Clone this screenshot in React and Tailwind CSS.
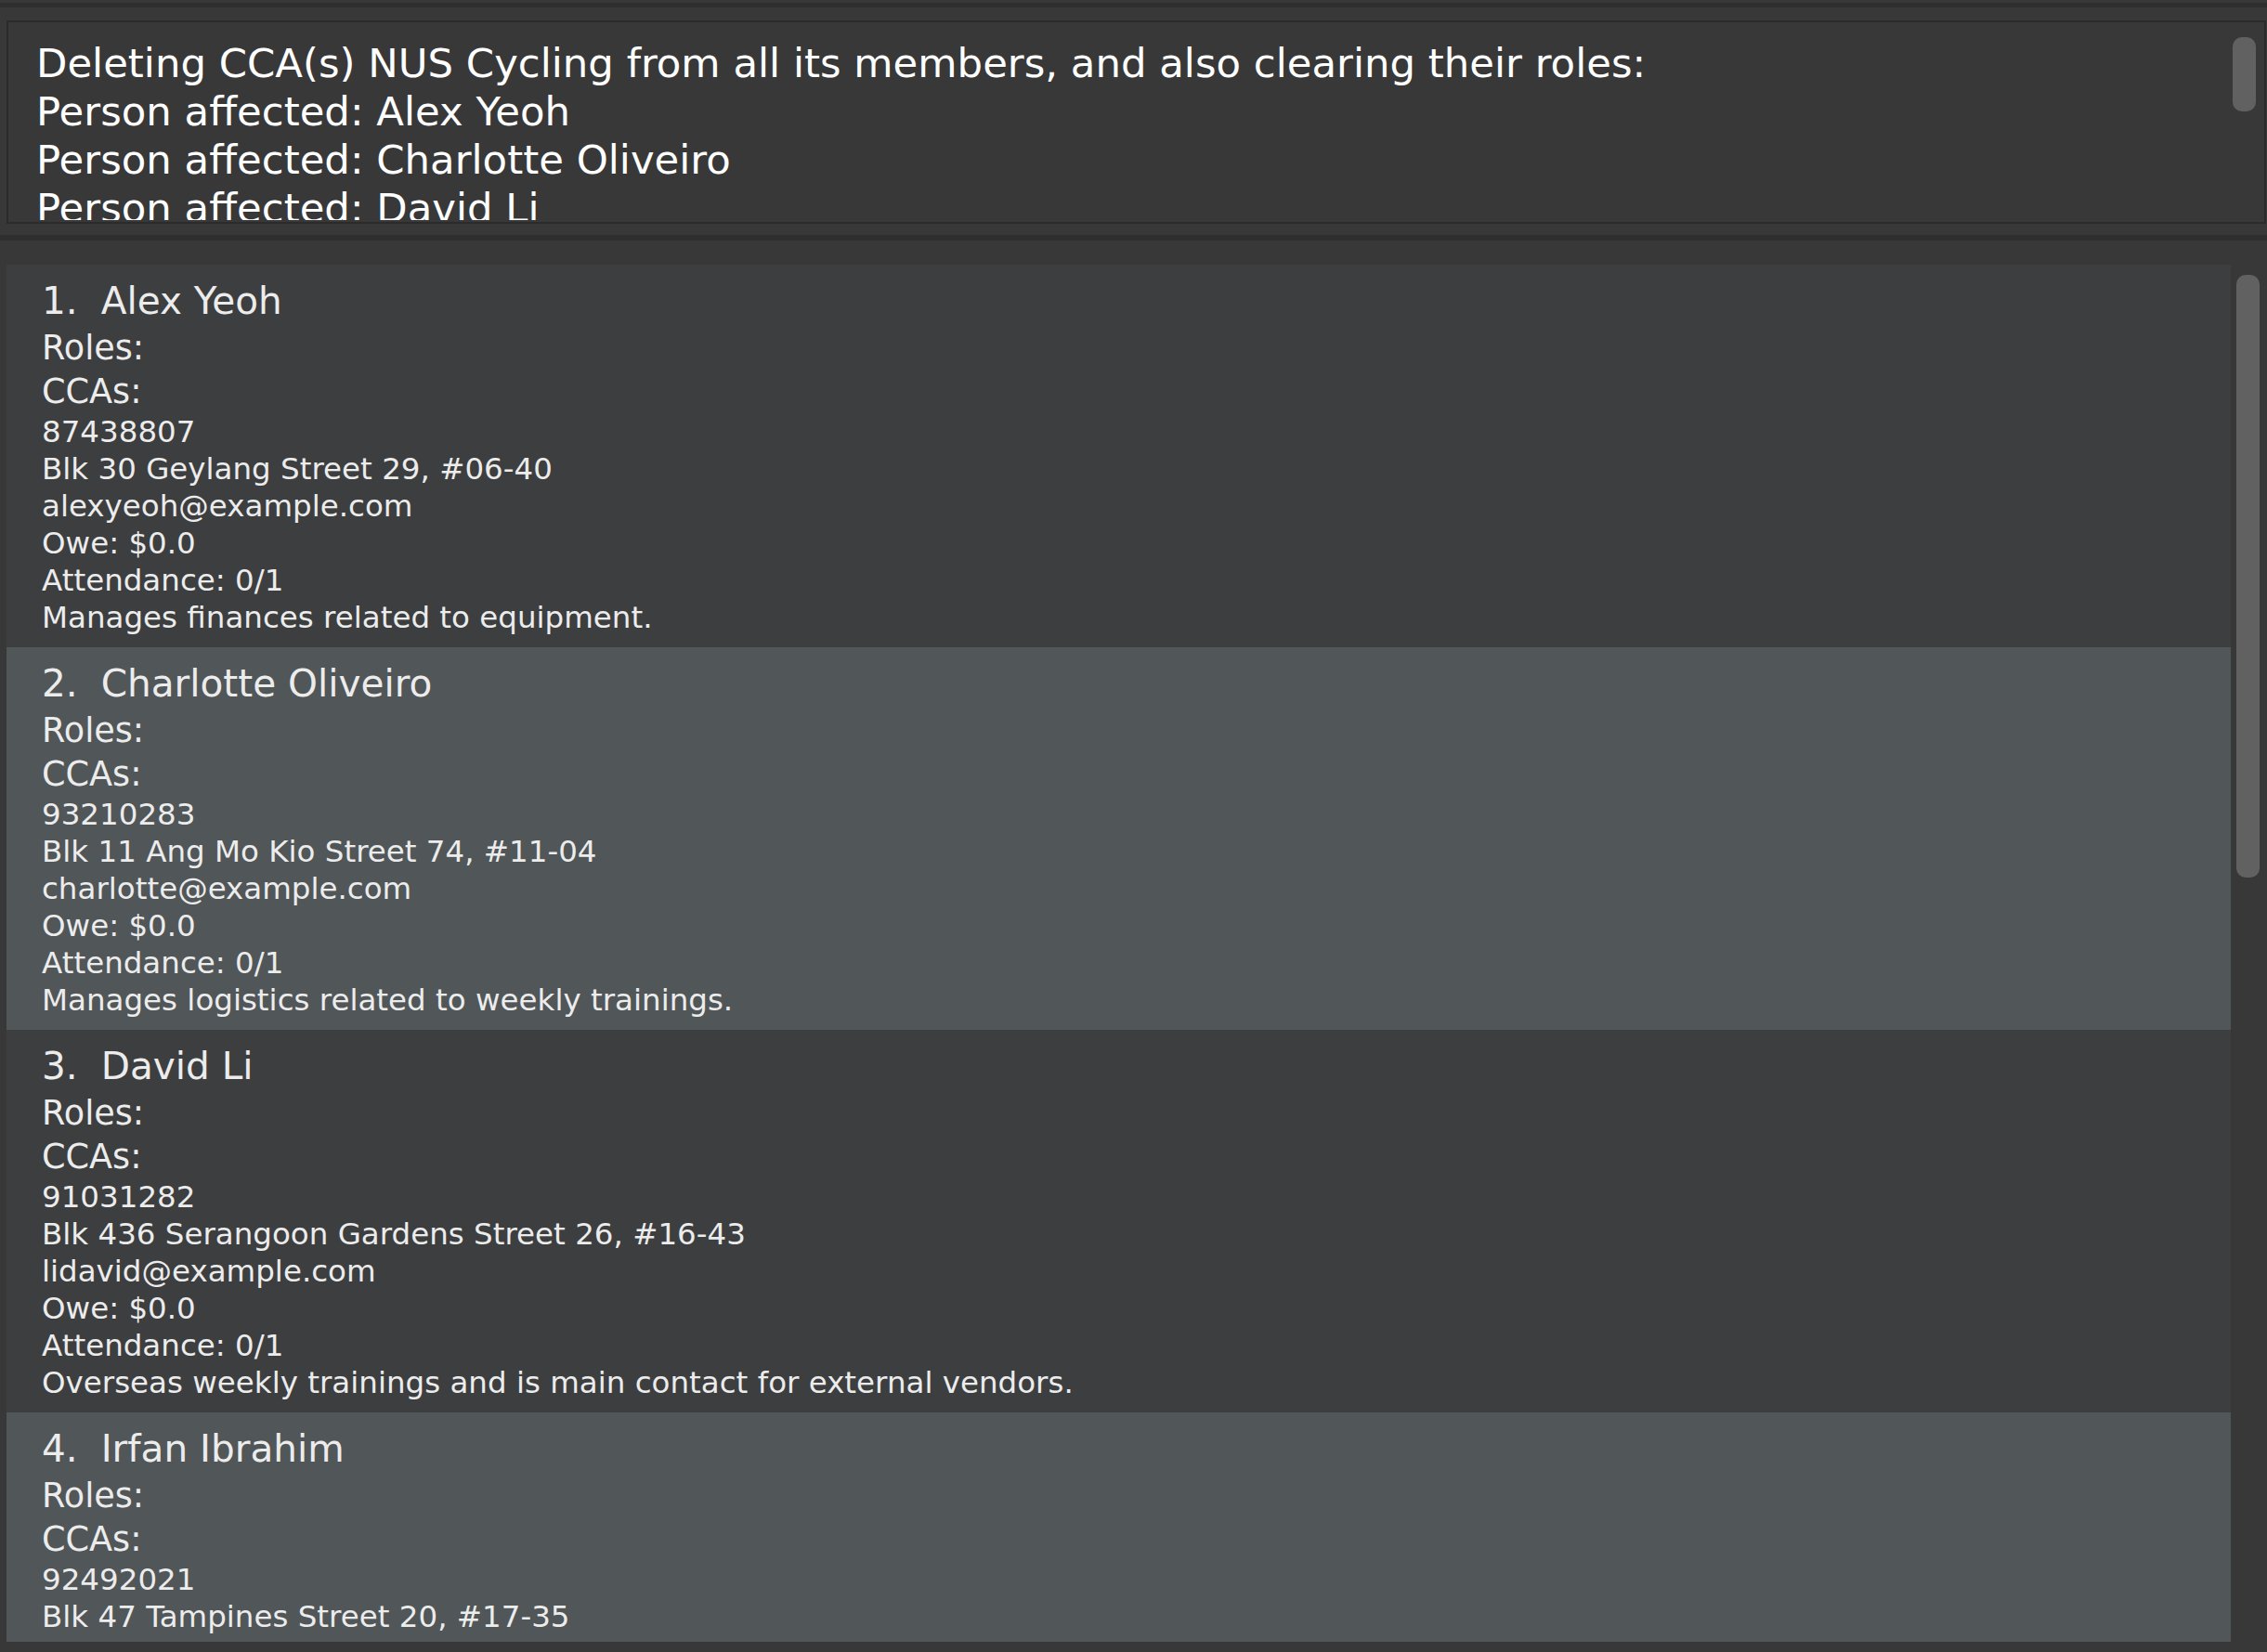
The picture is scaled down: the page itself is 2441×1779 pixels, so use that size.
import React from 'react';

const persons = [
    {
        name: 'Alex Yeoh',
        phone: '87438807',
        address: 'Blk 30 Geylang Street 29, #06-40',
        email: 'alexyeoh@example.com',
        note: 'Manages finances related to equipment.',
    },
    {
        name: 'Charlotte Oliveiro',
        phone: '93210283',
        address: 'Blk 11 Ang Mo Kio Street 74, #11-04',
        email: 'charlotte@example.com',
        note: 'Manages logistics related to weekly trainings.',
    },
    {
        name: 'David Li',
        phone: '91031282',
        address: 'Blk 436 Serangoon Gardens Street 26, #16-43',
        email: 'lidavid@example.com',
        note: 'Overseas weekly trainings and is main contact for external vendors.',
    },
    {
        name: 'Irfan Ibrahim',
        phone: '92492021',
        address: 'Blk 47 Tampines Street 20, #17-35',
        email: 'irfan@example.com',
        note: 'Handles member registrations.',
    },
];

const resultLines = [
    'Deleting CCA(s) NUS Cycling from all its members, and also clearing their roles:',
    'Person affected: Alex Yeoh',
    'Person affected: Charlotte Oliveiro',
    'Person affected: David Li',
];

const PersonCard = ({ person, index }) => (
    <div
        className={`shrink-0 h-[412px] pl-[38px] pt-[14px] text-[#ececec] ${
            index % 2 === 0 ? 'bg-[#3c3e3f]' : 'bg-[#515658]'
        }`}
    >
        <div className="flex text-[40.6px] leading-[50px] whitespace-pre">
            <span>{index + 1}. </span>
            <span className="ml-[12px]">{person.name}</span>
        </div>
        <div className="text-[36.6px] leading-[49px] pt-[1px]">Roles:</div>
        <div className="text-[36.6px] leading-[46px]">CCAs:</div>
        <div className="text-[32.5px] leading-[40px]">{person.phone}</div>
        <div className="text-[32.5px] leading-[40px]">{person.address}</div>
        <div className="text-[32.5px] leading-[40px]">{person.email}</div>
        <div className="text-[32.5px] leading-[40px]">Owe: $0.0</div>
        <div className="text-[32.5px] leading-[40px]">Attendance: 0/1</div>
        <div className="text-[32.5px] leading-[40px]">{person.note}</div>
    </div>
);

export default function App() {
    return (
        <div className="w-[2441px] h-[1779px] bg-[#383838] overflow-hidden flex flex-col font-['DejaVu_Sans',sans-serif]">
            <div className="h-[3px] shrink-0" />
            <div className="h-[5px] shrink-0 bg-[#2e2e2e]" />
            <div className="h-[14px] shrink-0" />

            {/* result display */}
            <div className="ml-[7px] mr-[1px] h-[219px] shrink-0 border-2 border-[#2b2b2b] bg-[#383838] flex">
                <div className="flex-1 h-[213px] overflow-hidden pl-[30px] pt-[18px] text-white text-[43.4px] leading-[52px] whitespace-nowrap">
                    {resultLines.map(line => (
                        <div key={line}>{line}</div>
                    ))}
                </div>
                <div className="w-[25px] mr-[9px] pt-[16px]">
                    <div className="h-[80px] rounded-[10px] bg-[#616161]" />
                </div>
            </div>

            <div className="h-[12px] shrink-0" />
            <div className="h-[6px] shrink-0 bg-[#2e2e2e]" />
            <div className="h-[26px] shrink-0" />

            {/* person list */}
            <div className="flex h-[1483px] shrink-0">
                <div className="ml-[7px] w-[2395px] overflow-hidden flex flex-col">
                    {persons.map((p, i) => (
                        <PersonCard key={p.name} person={p} index={i} />
                    ))}
                </div>
                <div className="ml-[6px] w-[25px] pt-[11px]">
                    <div className="h-[649px] rounded-[10px] bg-[#616161]" />
                </div>
            </div>
        </div>
    );
}
